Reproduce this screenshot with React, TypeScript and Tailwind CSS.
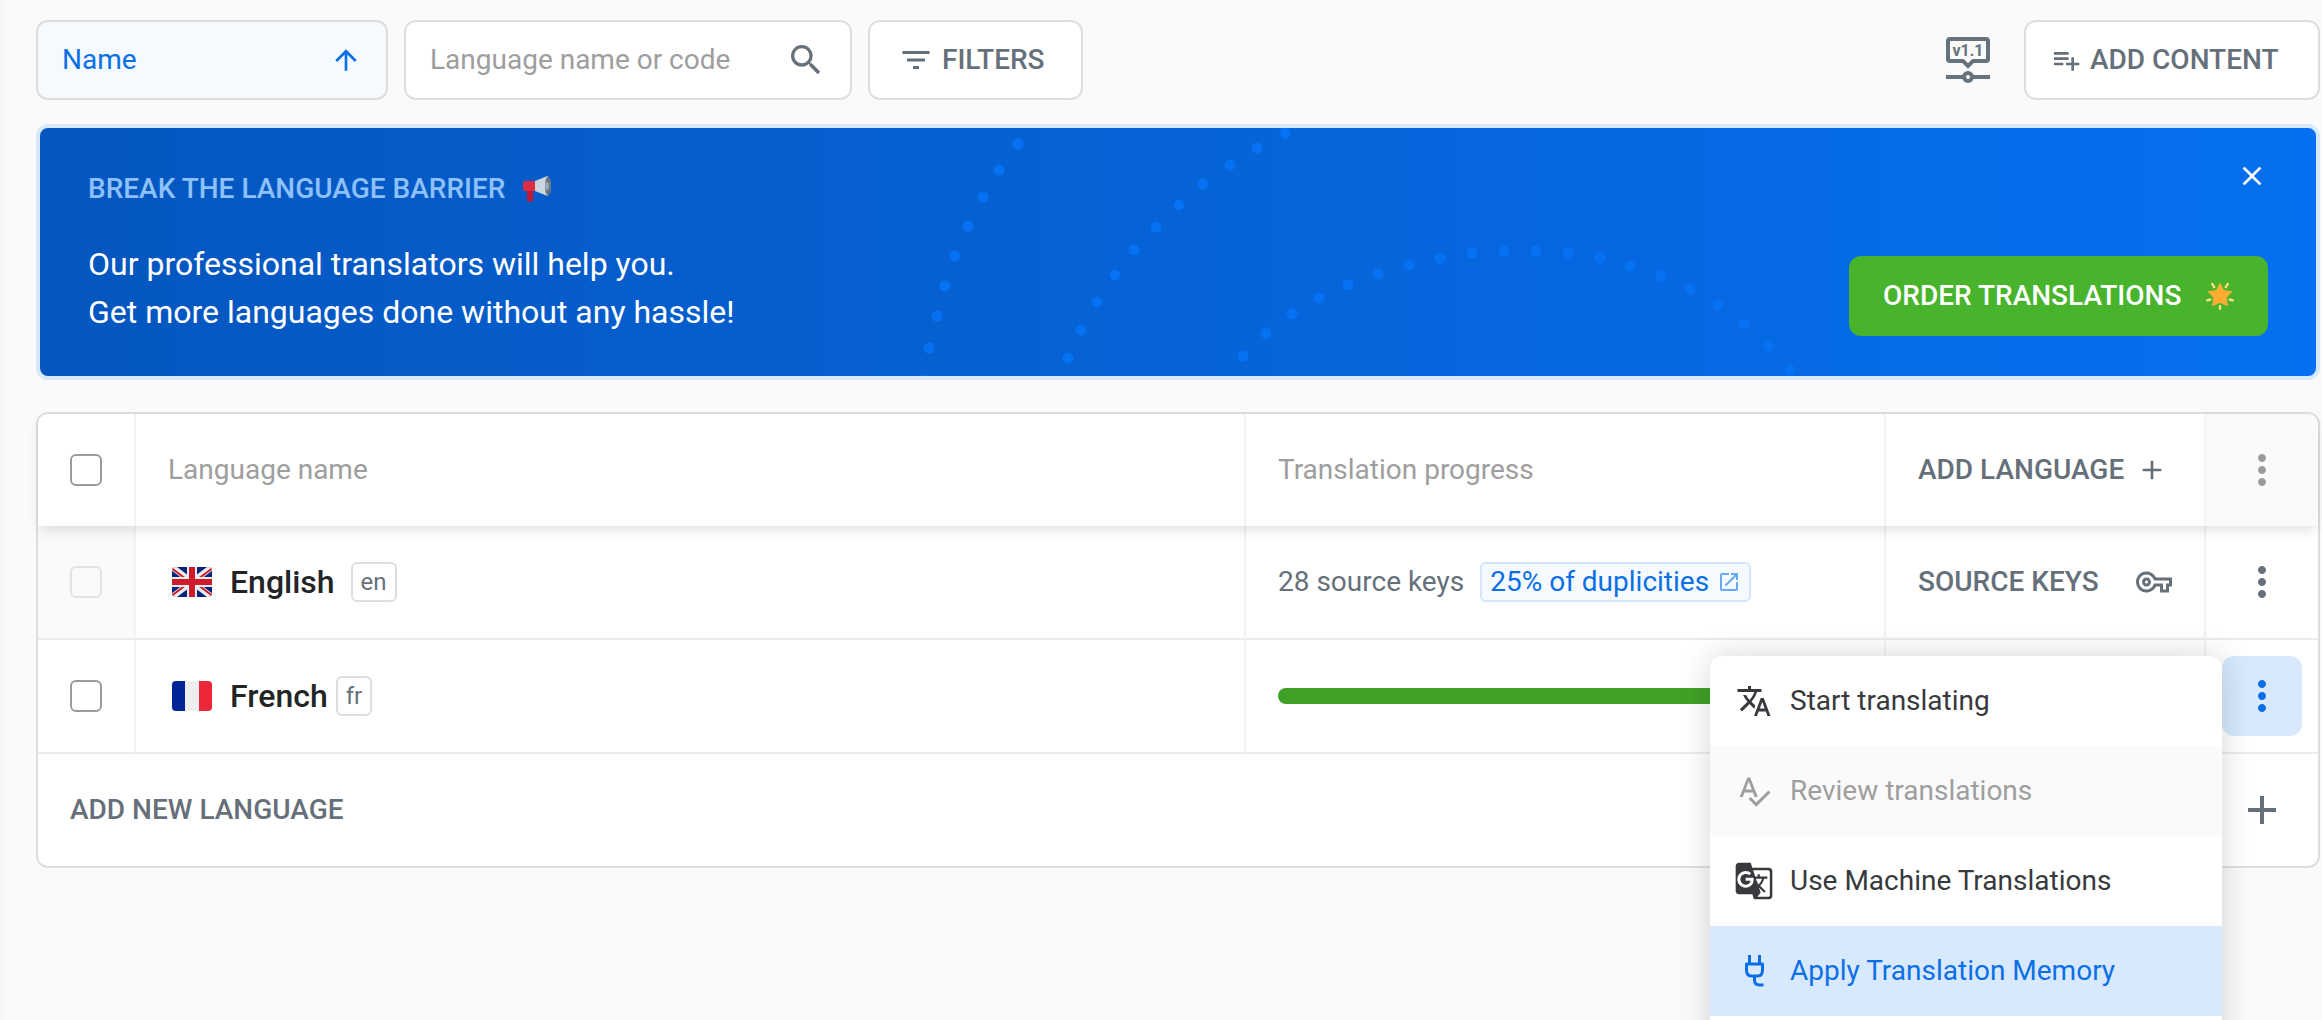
import React from "react";
import {
  MdAdd,
  MdArrowUpward,
  MdClose,
  MdFilterList,
  MdGTranslate,
  MdMoreVert,
  MdOpenInNew,
  MdOutlineVpnKey,
  MdPlaylistAdd,
  MdSearch,
  MdSpellcheck,
  MdTranslate,
} from "react-icons/md";

const DOTS: [number, number][] = [
  [1018, 144], [999, 170], [983, 197], [968, 226], [955, 256], [945, 286], [937, 316], [929, 348], [925, 380],
  [1068, 358], [1081, 330], [1097, 302], [1115, 275], [1134, 250], [1156, 227], [1179, 205], [1203, 184],
  [1230, 165], [1257, 148], [1285, 133],
  [1243, 356], [1266, 333], [1292, 314], [1319, 298], [1348, 285], [1378, 274], [1409, 265], [1440, 258],
  [1472, 253], [1504, 251], [1536, 251], [1568, 253], [1600, 258], [1630, 266], [1661, 276], [1690, 289],
  [1718, 305], [1744, 324], [1768, 346], [1790, 370],
];

function BannerDots() {
  return (
    <svg className="pointer-events-none absolute inset-0 h-full w-full" viewBox="40 128 2276 248" preserveAspectRatio="xMinYMin meet" aria-hidden="true">
      {DOTS.map(([x, y]) => (
        <circle key={`${x}-${y}`} cx={x} cy={y} r="5.5" fill="#0671f2" />
      ))}
    </svg>
  );
}

function Megaphone() {
  return (
    <svg className="h-7 w-7" viewBox="0 0 28 28" aria-hidden="true">
      <path d="M4 12h6v13q0 1.500-1.500 1.500h-3Q4 26.500 4 25z" fill="#be1931" />
      <path d="M2.500 6Q0 6 0 8.500v5Q0 16 2.500 16H13V6z" fill="#dd2e44" />
      <path d="M12 6 24.500 1Q28 5 28 10.500T24.500 21L12 16z" fill="#ccd6dd" />
      <ellipse cx="25" cy="11" rx="3" ry="9.500" fill="#66757f" />
      <ellipse cx="24" cy="11" rx="2" ry="4" fill="#99aab5" />
    </svg>
  );
}

function GlowingStar() {
  return (
    <svg className="h-7 w-7" viewBox="0 0 36 36" aria-hidden="true">
      <g stroke="#ffe17a" strokeWidth="3" strokeLinecap="round">
        <path d="M8 2.500l2.500 4M28 2.500l-2.500 4M1.500 23.500l4-1M34.500 23.500l-4-1M18 31v3.500" />
      </g>
      <path d="M18 1.500l4.600 9.400 10.900 1.500-7.500 7.600 1.700 10.600L18 26.200l-9.700 4.400L10 20l-7.500-7.600 10.900-1.500z" fill="#ffac33" stroke="#ffac33" strokeLinejoin="round" />
    </svg>
  );
}

function VersionIcon() {
  return (
    <svg className="block h-[46px] w-11" viewBox="0 0 44 46" aria-hidden="true">
      <path d="M4 2h36q2 0 2 2v18q0 2-2 2H27l-5 5-5-5H4q-2 0-2-2V4q0-2 2-2z" fill="none" stroke="#66737c" strokeWidth="4" />
      <path d="M0 40h18M26 40h18" stroke="#66737c" strokeWidth="4" />
      <circle cx="22" cy="40" r="4" fill="none" stroke="#66737c" strokeWidth="4" />
      <text x="22" y="19" textAnchor="middle" fill="#66737c" fontFamily="Roboto, sans-serif" fontWeight="700" fontSize="16">v1.1</text>
    </svg>
  );
}

function BritishFlag() {
  return (
    <svg className="h-[30px] w-10" viewBox="0 0 40 30" aria-hidden="true">
      <defs>
        <clipPath id="gb-corners"><rect width="40" height="30" rx="4" /></clipPath>
      </defs>
      <g clipPath="url(#gb-corners)">
        <path d="M0 0h40v30H0z" fill="#00247d" />
        <path d="M0 0l40 30M40 0L0 30" stroke="#eee" strokeWidth="6" />
        <path d="M0 1.500l16 12M40 1.500l-16 12M0 28.500l16-12M40 28.500l-16-12" stroke="#cf1b2b" strokeWidth="2" />
        <path d="M20 0v30M0 15h40" stroke="#eee" strokeWidth="10" />
        <path d="M20 0v30M0 15h40" stroke="#cf1b2b" strokeWidth="6" />
      </g>
    </svg>
  );
}

function FrenchFlag() {
  return (
    <span className="flex h-[30px] w-10 overflow-hidden rounded" aria-hidden="true">
      <span className="flex-1 bg-[#002495]" />
      <span className="flex-1 bg-[#eeeeee]" />
      <span className="flex-1 bg-[#ed2939]" />
    </span>
  );
}

function PlugIcon() {
  return (
    <svg className="h-9 w-9" viewBox="0 0 36 36" fill="none" stroke="currentColor" strokeWidth="3" strokeLinejoin="round" aria-hidden="true">
      <path d="M13.500 2v9M23.500 2v9M10.500 11h16v6q0 6-5 6h-6q-5 0-5-6zM18.500 23v4q0 5 5 5h4" />
    </svg>
  );
}

function Checkbox({ label, disabled = false }: { label: string; disabled?: boolean }) {
  return (
    <input
      type="checkbox"
      aria-label={label}
      disabled={disabled}
      className="block h-8 w-8 appearance-none rounded-md border-2 border-[#9b9b9b] bg-white checked:bg-[#0b6fe6] disabled:border-[#e2e2e2] disabled:bg-transparent"
    />
  );
}

function LanguageCode({ children }: { children: React.ReactNode }) {
  return (
    <span className="flex h-10 items-center rounded-md border-2 border-[#dedede] px-2 text-2xl text-[#66707a]">{children}</span>
  );
}

const menuItem = "flex h-[90px] w-full items-center gap-4 px-6 text-left text-[28px]";
const menuIcon = "flex w-10 justify-center";

function ContextMenu() {
  return (
    <div role="menu" className="absolute right-full top-4 z-20 w-[512px] overflow-hidden rounded-xl bg-white font-normal shadow-[0_0_32px_rgba(0,0,0,0.16)]">
      <button type="button" role="menuitem" className={`${menuItem} text-[#37393c]`}>
        <span className={menuIcon}><MdTranslate className="h-9 w-9" /></span>
        Start translating
      </button>
      <button type="button" role="menuitem" disabled className={`${menuItem} bg-[#fafafa] text-[#9e9e9e]`}>
        <span className={menuIcon}><MdSpellcheck className="h-9 w-9" /></span>
        Review translations
      </button>
      <button type="button" role="menuitem" className={`${menuItem} text-[#37393c]`}>
        <span className={menuIcon}><MdGTranslate className="h-10 w-10" /></span>
        Use Machine Translations
      </button>
      <button type="button" role="menuitem" className={`${menuItem} bg-[#d8e9fd] text-[#0b6fe6]`}>
        <span className={menuIcon}><PlugIcon /></span>
        Apply Translation Memory
      </button>
      <button type="button" role="menuitem" className={`${menuItem} text-[#37393c]`} aria-label="More options" />
    </div>
  );
}

const toolbarBox = "flex h-20 items-center rounded-xl border-2 border-[#dedede]";

export default function App() {
  return (
    <div className="h-screen overflow-hidden border-l-4 border-[#f6f6f6] bg-[#fafafa] pl-8 pr-0.5 pt-5 font-[Roboto,sans-serif] text-[28px] text-[#66707a]">
      <header className="flex items-center gap-4">
        <button type="button" className={`${toolbarBox} w-[352px] justify-between bg-[#f5faff] px-6 text-[#0b6fe6]`}>
          Name
          <MdArrowUpward className="h-8 w-8" />
        </button>
        <label className={`${toolbarBox} w-[448px] bg-white pl-6 pr-6`}>
          <input
            type="text"
            aria-label="Language name or code"
            placeholder="Language name or code"
            className="min-w-0 flex-1 bg-transparent outline-none placeholder:text-[#9e9e9e]"
          />
          <MdSearch className="h-10 w-10" />
        </label>
        <button type="button" className={`${toolbarBox} w-[215px] gap-2 bg-white px-7 font-medium`}>
          <MdFilterList className="h-9 w-9" />
          FILTERS
        </button>
        <div className="ml-auto flex items-center gap-[34px]">
          <button type="button" aria-label="Version 1.1">
            <VersionIcon />
          </button>
          <button type="button" className={`${toolbarBox} w-[296px] gap-2 bg-white px-6 font-medium`}>
            <MdPlaylistAdd className="h-8 w-8" />
            ADD CONTENT
          </button>
        </div>
      </header>

      <section className="relative mt-6 flex h-64 justify-between rounded-xl border-4 border-[#d8e9fb] bg-[#0556be] bg-[linear-gradient(90deg,#0556be,#0670f0)] bg-origin-border px-12 pb-10 pt-[45px]">
        <BannerDots />
        <div className="relative">
          <h2 className="flex items-center gap-[18px] font-medium leading-8 text-[#8dc1fb]">
            BREAK THE LANGUAGE BARRIER
            <Megaphone />
          </h2>
          <p className="mt-[35px] text-[32px] leading-[48px] text-white">
            Our professional translators will help you.
            <br />
            Get more languages done without any hassle!
          </p>
        </div>
        <button type="button" className="relative flex h-20 w-[419px] items-center justify-between self-end rounded-xl bg-[#48b32c] px-[34px] font-medium text-white">
          ORDER TRANSLATIONS
          <GlowingStar />
        </button>
        <button type="button" aria-label="Close" className="absolute right-12 top-8 text-white">
          <MdClose className="h-8 w-8" />
        </button>
      </section>

      <div className="mt-8 rounded-xl border-2 border-[#dedede] bg-white">
        <table className="w-full table-fixed border-separate border-spacing-0 text-left">
          <colgroup>
            <col className="w-[98px]" />
            <col />
            <col className="w-[640px]" />
            <col className="w-[320px]" />
            <col className="w-[112px]" />
          </colgroup>
          <thead className="relative z-10 shadow-[0_6px_12px_-2px_rgba(0,0,0,0.12)]">
            <tr className="h-28">
              <th className="rounded-tl-xl border-r-2 border-[#f3f3f3] bg-white pl-8"><Checkbox label="Select all languages" /></th>
              <th className="border-r-2 border-[#f3f3f3] bg-white pl-8 font-normal text-[#9e9e9e]">Language name</th>
              <th className="border-r-2 border-[#f3f3f3] bg-white pl-8 font-normal text-[#9e9e9e]">Translation progress</th>
              <th className="border-r-2 border-[#f3f3f3] bg-white px-8">
                <button type="button" className="flex w-full items-center justify-between font-medium">
                  ADD LANGUAGE
                  <MdAdd className="mr-1 h-8 w-8" />
                </button>
              </th>
              <th className="rounded-tr-xl bg-[#fafafa]">
                <button type="button" disabled aria-label="Bulk actions" className="mx-auto flex text-[#9b9b9b]">
                  <MdMoreVert className="h-12 w-12" />
                </button>
              </th>
            </tr>
          </thead>
          <tbody>
            <tr className="h-[114px]">
              <td className="border-b-2 border-r-2 border-[#ebebeb] border-r-[#f3f3f3] bg-[#fafafa] pl-8"><Checkbox label="Select English" disabled /></td>
              <td className="border-b-2 border-r-2 border-[#ebebeb] border-r-[#f3f3f3] pl-9">
                <div className="flex items-center">
                  <BritishFlag />
                  <span className="ml-[18px] mr-4 text-[32px] font-medium text-[#222426]">English</span>
                  <LanguageCode>en</LanguageCode>
                </div>
              </td>
              <td className="border-b-2 border-r-2 border-[#ebebeb] border-r-[#f3f3f3] pl-8">
                <div className="flex items-center gap-4">
                  28 source keys
                  <a href="#duplicities" className="flex h-10 items-center gap-2 rounded-md border-2 border-[#d3e5fb] bg-[#f5faff] px-2 text-[#0b6fe6]">
                    25% of duplicities
                    <MdOpenInNew className="h-6 w-6 text-[#6aaaf5]" />
                  </a>
                </div>
              </td>
              <td className="border-b-2 border-r-2 border-[#ebebeb] border-r-[#f3f3f3] px-8">
                <button type="button" className="flex w-full items-center justify-between font-medium">
                  SOURCE KEYS
                  <MdOutlineVpnKey className="h-9 w-9" />
                </button>
              </td>
              <td className="border-b-2 border-[#ebebeb]">
                <button type="button" aria-label="English actions" className="mx-auto flex">
                  <MdMoreVert className="h-12 w-12" />
                </button>
              </td>
            </tr>
            <tr className="h-[114px]">
              <td className="border-b-2 border-r-2 border-[#ebebeb] border-r-[#f3f3f3] pl-8"><Checkbox label="Select French" /></td>
              <td className="border-b-2 border-r-2 border-[#ebebeb] border-r-[#f3f3f3] pl-9">
                <div className="flex items-center">
                  <FrenchFlag />
                  <span className="ml-[18px] mr-2 text-[32px] font-medium text-[#222426]">French</span>
                  <LanguageCode>fr</LanguageCode>
                </div>
              </td>
              <td className="border-b-2 border-r-2 border-[#ebebeb] border-r-[#f3f3f3] px-8">
                <div className="h-4 rounded-full bg-[#40a127]" />
              </td>
              <td className="border-b-2 border-r-2 border-[#ebebeb] border-r-[#f3f3f3]" />
              <td className="relative border-b-2 border-[#ebebeb] p-0">
                <div className="pl-4">
                  <button type="button" aria-label="French actions" aria-haspopup="menu" aria-expanded="true" className="flex h-20 w-20 items-center justify-center rounded-xl bg-[#d8e9fd] text-[#0b6fe6]">
                    <MdMoreVert className="h-12 w-12" />
                  </button>
                </div>
                <div className="absolute left-4 top-0">
                  <ContextMenu />
                </div>
              </td>
            </tr>
          </tbody>
        </table>
        <button type="button" className="flex h-28 w-full items-center justify-between pl-8 pr-8 font-medium">
          ADD NEW LANGUAGE
          <MdAdd className="h-12 w-12" />
        </button>
      </div>
    </div>
  );
}
